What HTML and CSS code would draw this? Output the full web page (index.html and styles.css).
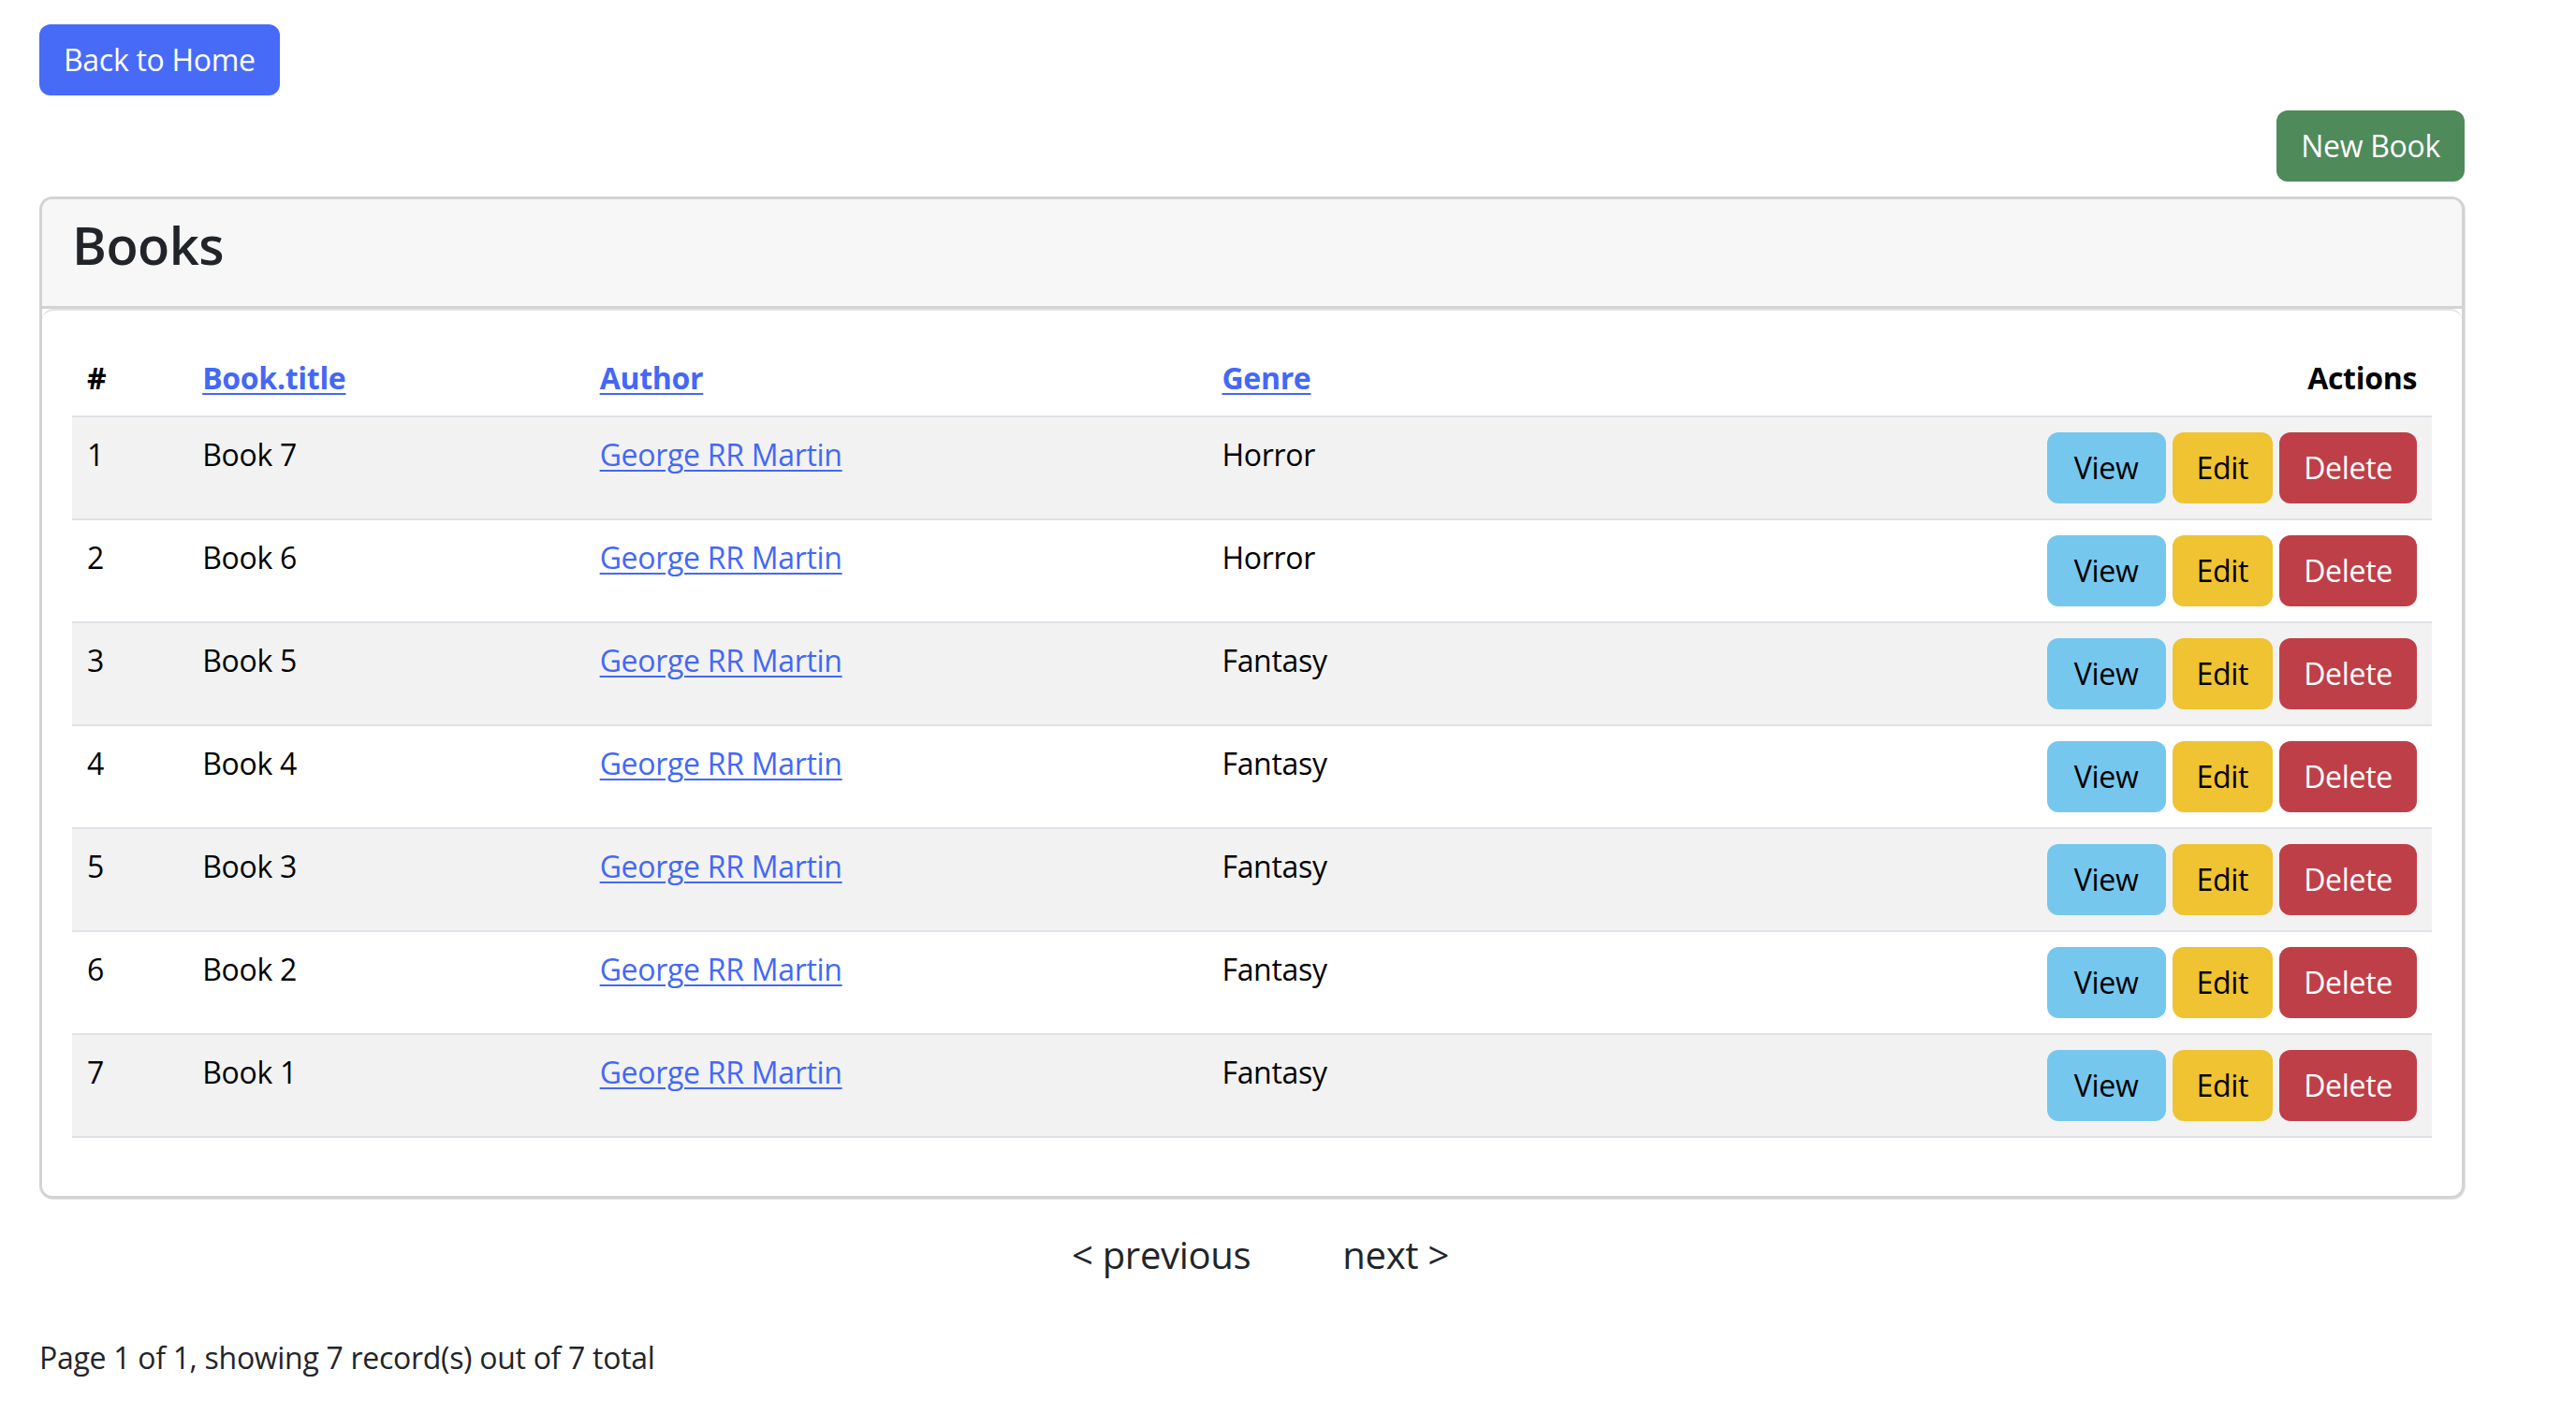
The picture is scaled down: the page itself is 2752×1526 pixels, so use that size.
FILE: index.html
```html
<!DOCTYPE html>
<html lang="en">
<head>
<meta charset="utf-8">
<title>Books</title>
<link rel="stylesheet" href="styles.css">
</head>
<body>
<div class="page">
  <div class="top-bar">
    <a class="btn btn-primary" href="#">Back to Home</a>
  </div>
  <div class="new-bar">
    <a class="btn btn-success" href="#">New Book</a>
  </div>
  <div class="card">
    <div class="card-header">
      <h3 class="card-title">Books</h3>
    </div>
    <div class="card-body">
      <table class="table">
        <thead>
          <tr>
            <th class="col-num">#</th>
            <th class="col-title"><a href="#">Book.title</a></th>
            <th class="col-author"><a href="#">Author</a></th>
            <th class="col-genre"><a href="#">Genre</a></th>
            <th class="col-actions">Actions</th>
          </tr>
        </thead>
        <tbody>
          <tr><td>1</td><td>Book 7</td><td><a href="#">George RR Martin</a></td><td>Horror</td><td class="actions"><a class="btn btn-info" href="#">View</a><a class="btn btn-warning" href="#">Edit</a><a class="btn btn-danger" href="#">Delete</a></td></tr>
          <tr><td>2</td><td>Book 6</td><td><a href="#">George RR Martin</a></td><td>Horror</td><td class="actions"><a class="btn btn-info" href="#">View</a><a class="btn btn-warning" href="#">Edit</a><a class="btn btn-danger" href="#">Delete</a></td></tr>
          <tr><td>3</td><td>Book 5</td><td><a href="#">George RR Martin</a></td><td>Fantasy</td><td class="actions"><a class="btn btn-info" href="#">View</a><a class="btn btn-warning" href="#">Edit</a><a class="btn btn-danger" href="#">Delete</a></td></tr>
          <tr><td>4</td><td>Book 4</td><td><a href="#">George RR Martin</a></td><td>Fantasy</td><td class="actions"><a class="btn btn-info" href="#">View</a><a class="btn btn-warning" href="#">Edit</a><a class="btn btn-danger" href="#">Delete</a></td></tr>
          <tr><td>5</td><td>Book 3</td><td><a href="#">George RR Martin</a></td><td>Fantasy</td><td class="actions"><a class="btn btn-info" href="#">View</a><a class="btn btn-warning" href="#">Edit</a><a class="btn btn-danger" href="#">Delete</a></td></tr>
          <tr><td>6</td><td>Book 2</td><td><a href="#">George RR Martin</a></td><td>Fantasy</td><td class="actions"><a class="btn btn-info" href="#">View</a><a class="btn btn-warning" href="#">Edit</a><a class="btn btn-danger" href="#">Delete</a></td></tr>
          <tr><td>7</td><td>Book 1</td><td><a href="#">George RR Martin</a></td><td>Fantasy</td><td class="actions"><a class="btn btn-info" href="#">View</a><a class="btn btn-warning" href="#">Edit</a><a class="btn btn-danger" href="#">Delete</a></td></tr>
        </tbody>
      </table>
    </div>
  </div>
  <nav class="pager">
    <a class="pager-link" href="#">&lt; previous</a>
    <a class="pager-link" href="#">next &gt;</a>
  </nav>
  <p class="summary">Page 1 of 1, showing 7 record(s) out of 7 total</p>
</div>
</body>
</html>
```
FILE: styles.css
```css
* { box-sizing: border-box; }

html, body {
  margin: 0;
  padding: 0;
  background: #fff;
}

body {
  font-family: "Open Sans", "Noto Sans", sans-serif;
  font-size: 32px;
  line-height: 1.5;
  letter-spacing: -0.3px;
  color: #212529;
}

.page {
  width: 2591px;
  margin-left: 42px;
  padding-top: 26px;
}

.top-bar {
  display: flex;
}

.new-bar {
  display: flex;
  justify-content: flex-end;
  margin-top: 16px;
}

.btn {
  display: inline-block;
  height: 76px;
  padding: 0 24px;
  border: 2px solid transparent;
  border-radius: 12px;
  font-size: 32px;
  line-height: 72px;
  text-decoration: none;
  white-space: nowrap;
}

.btn-primary { background: #476bf7; color: #fff; }
.btn-success { background: #4f8a5a; color: #fff; }
.btn-info { background: #76c7ee; color: #000; }
.btn-warning { background: #efc332; color: #000; }
.btn-danger { background: #bf3f48; color: #fff; }

.card {
  margin-top: 16px;
  border: 3px solid #d3d3d3;
  border-radius: 14px;
  background: #fff;
  overflow: hidden;
  box-shadow: 1px 1px 0 #e4e4e4;
}

.card-header {
  background: #f7f7f7;
  padding: 15px 32px 16px;
  border-bottom: 3px solid #d3d3d3;
}

.card-title {
  margin: 0 0 16px;
  font-size: 56px;
  font-weight: 600;
  line-height: 1.2;
  letter-spacing: -0.5px;
  color: #212529;
}

.card-body {
  padding: 32px;
  border-top: 2px solid #e3e3e3;
  border-radius: 12px 12px 0 0;
}

.table {
  width: 100%;
  border-collapse: collapse;
  table-layout: fixed;
  margin-bottom: 30px;
  color: #000;
}

.table th,
.table td {
  padding: 16px;
  text-align: left;
  vertical-align: top;
  border-bottom: 2px solid #dee2e6;
}

.table th {
  font-weight: 700;
  vertical-align: bottom;
}

.table thead th { border-bottom: 2px solid #dee2e6; }

.table tbody tr:nth-child(odd) td { background: #f2f2f2; }

.table a {
  color: #4468f5;
  text-decoration: underline;
  text-underline-offset: 4px;
  text-decoration-thickness: 2px;
}

.col-num { width: 123px; }
.col-title { width: 424px; }
.col-author { width: 664px; }
.col-genre { width: 857px; }
.col-actions { width: 450px; text-align: right !important; }

.table td.actions {
  text-align: right;
  white-space: nowrap;
  font-size: 0;
}

.table td.actions .btn {
  margin-left: 7px;
  padding: 0 24px;
  text-decoration: none;
}

.table td.actions .btn-info { color: #000; padding: 0 27px; }
.table td.actions .btn-warning { color: #000; }
.table td.actions .btn-danger { color: #fff; }

.pager {
  display: flex;
  justify-content: center;
  gap: 98px;
  margin-top: 30px;
  padding-left: 18px;
  font-size: 40px;
  line-height: 60px;
}

.pager-link {
  color: #212529;
  text-decoration: none;
}

.summary {
  margin: 56px 0 0;
  font-size: 32px;
  line-height: 48px;
  color: #212529;
}
```
